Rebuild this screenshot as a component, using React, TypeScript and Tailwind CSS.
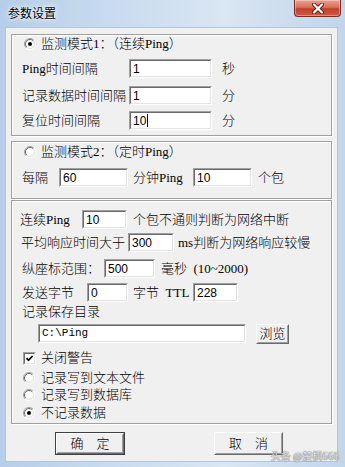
import React from 'react';

const LABEL = "font-[family-name:'Liberation_Serif','Noto_Sans_CJK_SC',serif] font-light text-[13px] leading-[16px] text-black";
const DIGITS = "font-[family-name:'Liberation_Sans',sans-serif] text-[12px]";

const Field: React.FC<{ w: string; value: string; mono?: boolean; caret?: boolean }> = ({ w, value, mono, caret }) => (
  <div className={`${w} h-[19px] shrink-0 border border-t-[#a0a0a0] border-l-[#a0a0a0] border-b-white border-r-white`}>
    <div className="h-full border border-t-[#696969] border-l-[#696969] border-b-[#e3e3e3] border-r-[#e3e3e3] bg-white flex items-center pl-[2px]">
      <span className={mono ? "font-[family-name:'Liberation_Mono',monospace] text-[11px] text-black" : `${DIGITS} text-black`}>{value}</span>
      {caret && <span className="w-[1px] h-[13px] bg-black ml-[1px]" />}
    </div>
  </div>
);

const Radio: React.FC<{ checked?: boolean }> = ({ checked }) => (
  <svg width="12" height="12" viewBox="0 0 12 12" className="shrink-0">
    <circle cx="6" cy="6" r="5" fill="#f4f4f4" />
    <path d="M9.9 2.1 A5.5 5.5 0 0 0 2.1 9.9" fill="none" stroke="#a0a0a0" />
    <path d="M9.9 2.1 A5.5 5.5 0 0 1 2.1 9.9" fill="none" stroke="#ffffff" />
    <path d="M9.2 2.8 A4.5 4.5 0 0 0 2.8 9.2" fill="none" stroke="#696969" />
    <path d="M9.2 2.8 A4.5 4.5 0 0 1 2.8 9.2" fill="none" stroke="#e3e3e3" />
    <circle cx="6" cy="6" r="3.6" fill="#fff" />
    {checked && <circle cx="6" cy="6" r="2" fill="#000" />}
  </svg>
);

const Check: React.FC = () => (
  <div className="w-[13px] h-[13px] shrink-0 border border-t-[#a0a0a0] border-l-[#a0a0a0] border-b-white border-r-white">
    <div className="w-full h-full border border-t-[#696969] border-l-[#696969] border-b-[#e3e3e3] border-r-[#e3e3e3] bg-white flex items-center justify-center">
      <svg width="9" height="9" viewBox="0 0 9 9">
        <path d="M1.5 4.2 L3.5 6.3 L7.6 2" fill="none" stroke="#000" strokeWidth="1.8" />
      </svg>
    </div>
  </div>
);

const Btn: React.FC<{ w: string; h: string; def?: boolean; children: React.ReactNode }> = ({ w, h, def, children }) => (
  <div className={`${w} ${h} shrink-0 ${def ? 'border border-[#404040]' : ''}`}>
    <div className="w-full h-full border border-t-white border-l-white border-b-[#696969] border-r-[#696969]">
      <div className={`w-full h-full border border-t-[#f0f0f0] border-l-[#f0f0f0] border-b-[#a0a0a0] border-r-[#a0a0a0] bg-[#f0f0f0] flex items-center justify-center ${LABEL}`}>
        {children}
      </div>
    </div>
  </div>
);

const Group: React.FC<{ h: string; mt: string; children: React.ReactNode }> = ({ h, mt, children }) => (
  <div className={`${h} ${mt} border border-[#a0a0a0] shadow-[inset_1px_1px_0_#fff,1px_1px_0_#fff] flex flex-col`}>
    {children}
  </div>
);

const App: React.FC = () => {
  return (
    <div className="w-[345px] h-[467px] relative overflow-hidden flex flex-col bg-[linear-gradient(90deg,#b6cee9_0%,#cadcef_35%,#d9e6f3_65%,#c1d5eb_100%)]">
      {/* title bar */}
      <div className="h-[27px] shrink-0 flex items-start">
        <span className="ml-[8px] mt-[5px] font-[family-name:'Noto_Sans_CJK_SC',sans-serif] text-[12px] leading-[16px] text-black [text-shadow:0_0_6px_#fff,0_0_3px_#fff]">
          参数设置
        </span>
        <div className="ml-auto mr-[4px] w-[47px] h-[17px] rounded-b-[4px] border border-t-0 border-[#7b2b20] bg-[linear-gradient(180deg,#e9a193_0%,#d8725f_45%,#c2402a_55%,#cf5a40_100%)] flex items-center justify-center shadow-[inset_0_0_0_1px_rgba(255,255,255,0.35)]">
          <svg width="14" height="11" viewBox="0 0 14 11">
            <path d="M3 1.5 L11 9.5 M11 1.5 L3 9.5" stroke="#5a1f16" strokeWidth="4" strokeLinecap="round" />
            <path d="M3 1.5 L11 9.5 M11 1.5 L3 9.5" stroke="#fff" strokeWidth="2.2" strokeLinecap="round" />
          </svg>
        </div>
      </div>

      {/* client area */}
      <div className="flex-1 ml-[5px] mr-[7px] mb-[5px] border border-[#b3c6dc] bg-[#f0f0f0] px-[5px] pt-[6px] flex flex-col">
        <Group h="h-[102px]" mt="mt-0">
          <div className="h-[16px] mt-[1px] pl-[12px] flex items-center gap-[5px]">
            <Radio checked />
            <span className={LABEL}>监测模式1：（连续Ping）</span>
          </div>
          <div className="h-[19px] mt-[7px] pl-[10px] flex items-center">
            <span className={`${LABEL} w-[107px] shrink-0`}>Ping时间间隔</span>
            <Field w="w-[83px]" value="1" />
            <span className={`${LABEL} ml-[10px]`}>秒</span>
          </div>
          <div className="h-[19px] mt-[8px] pl-[10px] flex items-center">
            <span className={`${LABEL} w-[107px] shrink-0`}>记录数据时间间隔</span>
            <Field w="w-[83px]" value="1" />
            <span className={`${LABEL} ml-[10px]`}>分</span>
          </div>
          <div className="h-[19px] mt-[6px] pl-[10px] flex items-center">
            <span className={`${LABEL} w-[107px] shrink-0`}>复位时间间隔</span>
            <Field w="w-[83px]" value="10" caret />
            <span className={`${LABEL} ml-[10px]`}>分</span>
          </div>
        </Group>

        <Group h="h-[58px]" mt="mt-[5px]">
          <div className="h-[16px] mt-[2px] pl-[12px] flex items-center gap-[5px]">
            <Radio />
            <span className={LABEL}>监测模式2：（定时Ping）</span>
          </div>
          <div className="h-[19px] mt-[8px] pl-[10px] flex items-center">
            <span className={`${LABEL} w-[37px] shrink-0`}>每隔</span>
            <Field w="w-[69px]" value="60" />
            <span className={`${LABEL} ml-[5px] w-[60px] shrink-0`}>分钟Ping</span>
            <Field w="w-[59px]" value="10" />
            <span className={`${LABEL} ml-[6px]`}>个包</span>
          </div>
        </Group>

        <Group h="h-[224px]" mt="mt-[1px]">
          <div className="h-[19px] mt-[9px] pl-[8px] flex items-center">
            <span className={`${LABEL} w-[62px] shrink-0`}>连续Ping</span>
            <Field w="w-[45px]" value="10" />
            <span className={`${LABEL} ml-[6px] whitespace-nowrap`}>个包不通则判断为网络中断</span>
          </div>
          <div className="h-[19px] mt-[4px] pl-[9px] flex items-center">
            <span className={`${LABEL} w-[107px] shrink-0`}>平均响应时间大于</span>
            <Field w="w-[46px]" value="300" />
            <span className={`${LABEL} ml-[4px] whitespace-nowrap`}>ms判断为网络响应较慢</span>
          </div>
          <div className="h-[19px] mt-[7px] pl-[10px] flex items-center">
            <span className={`${LABEL} w-[82px] shrink-0`}>纵座标范围：</span>
            <Field w="w-[51px]" value="500" />
            <span className={`${LABEL} ml-[6px] whitespace-pre`}>毫秒  (10~2000)</span>
          </div>
          <div className="h-[19px] mt-[5px] pl-[10px] flex items-center">
            <span className={`${LABEL} w-[65px] shrink-0`}>发送字节</span>
            <Field w="w-[41px]" value="0" />
            <span className={`${LABEL} ml-[5px] w-[60px] shrink-0 whitespace-pre`}>字节  TTL</span>
            <Field w="w-[45px]" value="228" />
          </div>
          <div className="h-[16px] mt-[2px] pl-[10px] flex items-center">
            <span className={LABEL}>记录保存目录</span>
          </div>
          <div className="h-[20px] mt-[4px] pl-[26px] flex items-start">
            <Field w="w-[208px]" value="C:\Ping" mono />
            <div className="ml-[10px]">
              <Btn w="w-[33px]" h="h-[20px]">浏览</Btn>
            </div>
          </div>
          <div className="h-[16px] mt-[6px] pl-[11px] flex items-center gap-[5px]">
            <Check />
            <span className={LABEL}>关闭警告</span>
          </div>
          <div className="h-[16px] mt-[4px] pl-[11px] flex items-center gap-[6px]">
            <Radio />
            <span className={LABEL}>记录写到文本文件</span>
          </div>
          <div className="h-[16px] mt-[1px] pl-[11px] flex items-center gap-[6px]">
            <Radio />
            <span className={LABEL}>记录写到数据库</span>
          </div>
          <div className="h-[16px] mt-[2px] pl-[11px] flex items-center gap-[6px]">
            <Radio checked />
            <span className={LABEL}>不记录数据</span>
          </div>
        </Group>

        <div className="mt-[8px] pl-[44px] flex">
          <Btn w="w-[70px]" h="h-[23px]" def>确　定</Btn>
          <div className="ml-[89px]">
            <Btn w="w-[69px]" h="h-[23px]">取　消</Btn>
          </div>
        </div>
      </div>

      {/* watermark */}
      <span className="absolute right-[6px] bottom-[5px] font-[family-name:'Noto_Sans_CJK_SC',sans-serif] text-[10px] leading-[12px] text-[#e6e6e6] [text-shadow:0_0_1px_#666,0_0_1px_#666]">
        头条 @楚枫666
      </span>
    </div>
  );
};

export default App;
